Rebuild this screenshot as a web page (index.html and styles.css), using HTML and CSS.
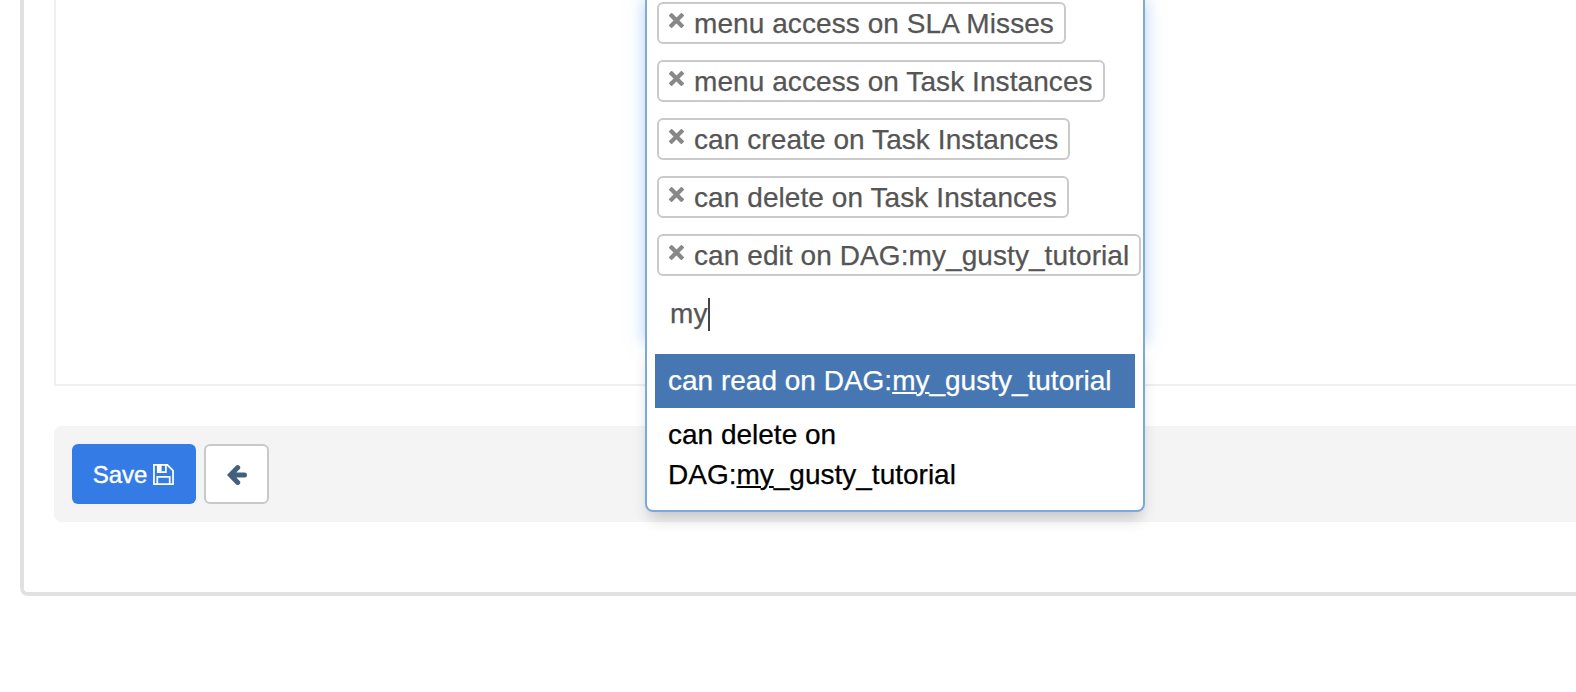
FILE: index.html
```
<!DOCTYPE html>
<html lang="en">
<head>
<meta charset="utf-8">
<title>Edit Role</title>
<link rel="stylesheet" href="styles.css">
</head>
<body>
<svg width="0" height="0" class="defs">
  <symbol id="remove" viewBox="0 0 15 15"><path d="M2.6 2.6 12.4 12.4M12.4 2.6 2.6 12.4"/></symbol>
</svg>
<main class="panel">
  <div class="field"></div>
  <div class="actions">
    <button class="btn btn-primary">Save
      <svg class="disk" viewBox="0 0 22 22"><path d="M1 1H15L21 7V21H1ZM5 1V8.5H13.5V1M4.5 21V13.5H17.5V21" /><path class="solid" d="M5 1H9V8H5Z"/></svg>
    </button>
    <button class="btn btn-back" aria-label="Back">
      <svg class="arrow" viewBox="0 0 20 22"><path d="M10.7 3.6 3.4 11 10.7 18.4M4 11H17.5"/></svg>
    </button>
  </div>
</main>
<div class="select">
  <ul class="choices">
    <li class="choice"><svg class="remove"><use href="#remove"/></svg>menu access on SLA Misses</li>
    <li class="choice"><svg class="remove"><use href="#remove"/></svg>menu access on Task Instances</li>
    <li class="choice"><svg class="remove"><use href="#remove"/></svg>can create on Task Instances</li>
    <li class="choice"><svg class="remove"><use href="#remove"/></svg>can delete on Task Instances</li>
    <li class="choice"><svg class="remove"><use href="#remove"/></svg>can edit on DAG:my_gusty_tutorial</li>
    <li class="search">my<span class="caret"></span></li>
  </ul>
  <ul class="results">
    <li class="result active">can read on DAG:<span class="match">my</span>_gusty_tutorial</li>
    <li class="result">can delete on DAG:<span class="match">my</span>_gusty_tutorial</li>
  </ul>
</div>
</body>
</html>
```
FILE: styles.css
```
* { box-sizing: border-box; }

body {
  position: relative;
  width: 1576px;
  height: 692px;
  margin: 0;
  overflow: hidden;
  background: #fff;
  font-family: "Liberation Sans", Arial, sans-serif;
}

ul { list-style: none; margin: 0; padding: 0; }

.defs { position: absolute; }

.panel {
  height: 596px;
  margin-left: 20px;
  padding-left: 30px;
  border: solid #e1e1e1;
  border-width: 0 0 4px 4px;
  border-bottom-left-radius: 8px;
}

.field {
  height: 386px;
  border: solid #efefef;
  border-width: 0 0 2px 2px;
}

.actions {
  display: flex;
  gap: 8px;
  height: 96px;
  margin-top: 40px;
  padding: 18px;
  background: #f4f4f4;
  border-radius: 8px 0 0 8px;
}

.btn {
  display: flex;
  align-items: center;
  justify-content: center;
  height: 60px;
  padding: 2px 0 0;
  border-radius: 6px;
  font: 24px/36px "Liberation Sans", Arial, sans-serif;
}

.btn-primary {
  width: 124px;
  gap: 6px;
  border: 0;
  background: #347be5;
  color: #fff;
  -webkit-text-stroke: 0.4px #fff;
}

.btn-back {
  width: 65px;
  border: 2px solid #c9c9c9;
  background: #fff;
}

.disk {
  width: 21px;
  height: 21px;
  margin: 0 1px 2px 0;
  fill: none;
  stroke: #fff;
  stroke-width: 1.8;
}

.disk .solid { fill: #fff; stroke: none; }

.arrow {
  width: 20px;
  height: 22px;
  fill: none;
  stroke: #44607f;
  stroke-width: 5;
  stroke-linecap: round;
}

.select {
  position: absolute;
  top: 0;
  left: 645px;
  width: 500px;
  font-size: 28px;
}

.choices {
  display: flex;
  flex-direction: column;
  align-items: flex-start;
  gap: 16px;
  height: 344px;
  padding: 2px 0 0 10px;
  border: solid #82aad3;
  border-width: 0 2px;
  background: #fff;
  box-shadow: 0 0 16px rgba(102, 160, 240, 0.5);
}

.choice {
  display: flex;
  flex: none;
  height: 42px;
  padding: 1px 10px 0;
  border: 2px solid #cacaca;
  border-radius: 6px;
  background: #fff;
  color: #555;
  letter-spacing: 0.08px;
  line-height: 38px;
  white-space: nowrap;
  -webkit-text-stroke: 0.25px #555;
}

.remove {
  flex: none;
  width: 15px;
  height: 15px;
  margin: 8px 10px 0 0;
  stroke: #888;
  stroke-width: 4.2;
  stroke-linecap: square;
}

.search {
  display: flex;
  align-items: center;
  height: 44px;
  padding-left: 13px;
  color: #555;
  line-height: 46px;
  letter-spacing: 0.3px;
  -webkit-text-stroke: 0.25px #555;
}

.caret { width: 2px; height: 33px; background: #444; }

.results {
  position: relative;
  height: 168px;
  padding: 10px 8px 8px;
  border: 2px solid #79aadd;
  border-top: 0;
  border-radius: 0 0 8px 8px;
  background: #fff;
  box-shadow: 0 10px 16px -4px rgba(0, 0, 0, 0.2);
}

.result {
  padding: 7px 14px 7px 13px;
  color: #000;
  line-height: 40px;
  -webkit-text-stroke: 0.25px currentColor;
}

.active { background: #4677b2; color: #fff; white-space: nowrap; }

.match { text-decoration: underline; text-decoration-thickness: 2px; text-underline-offset: 2px; }
```
